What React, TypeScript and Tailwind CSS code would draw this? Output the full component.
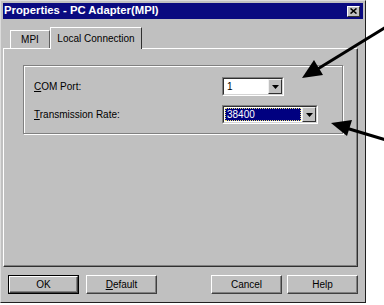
import React from "react";

const Combo = ({ value, width, focused }: any) => {
  return (
    <div
      className={`flex h-[19px] border border-t-[#808080] border-l-[#808080] border-r-white border-b-white`}
      style={{ width }}
    >
      <div className="flex flex-1 border border-t-[#303030] border-l-[#303030] border-r-[#d4d4d4] border-b-[#d4d4d4] bg-white">
        <div className="flex flex-1 items-center p-[1px]">
          {focused ? (
            <div className="flex h-full flex-1 items-center border border-dotted border-[#e8e070] bg-[#000080] pl-[1px] text-white">
              {value}
            </div>
          ) : (
            <div className="pl-[2px] text-black">{value}</div>
          )}
        </div>
        <div className="flex w-[14px] items-center justify-center border border-t-[#f0f0f0] border-l-[#f0f0f0] border-r-[#303030] border-b-[#303030] bg-[#c0c0c0]">
          <svg width="7" height="4" viewBox="0 0 7 4">
            <polygon points="0,0 7,0 3.5,4" fill="#000" />
          </svg>
        </div>
      </div>
    </div>
  );
};

const Btn = ({ children, isDefault }: any) => {
  return (
    <div
      className={
        isDefault
          ? "h-[19px] w-[71px] border border-black"
          : "h-[19px] w-[71px]"
      }
    >
      <div className="flex h-full w-full items-center justify-center border border-t-white border-l-white border-r-[#404040] border-b-[#404040] bg-[#c0c0c0] shadow-[inset_-1px_-1px_0_#808080] text-[10px] text-black">
        {children}
      </div>
    </div>
  );
};

export default function App() {
  return (
    <div className="relative h-[305px] w-[384px] overflow-hidden bg-white font-['Liberation_Sans',Arial,sans-serif] text-[10px]">
      <div className="flex h-[303px] w-[366px] flex-col border border-t-[#dcdcdc] border-l-[#dcdcdc] border-r-[#202020] border-b-[#202020] bg-[#c0c0c0] p-[2px]">
        {/* title bar */}
        <div className="flex h-[16px] items-center justify-between bg-[#0a0a80] pl-[1px] pr-[3px]">
          <span className="text-[11.3px] font-bold leading-none text-white">
            Properties - PC Adapter(MPI)
          </span>
          <div className="flex h-[11px] w-[13px] items-center justify-center border border-t-white border-l-white border-r-[#303030] border-b-[#303030] bg-[#c0c0c0]">
            <svg width="7" height="6" viewBox="0 0 7 6">
              <path d="M0.5 0.5 L6.5 5.5 M6.5 0.5 L0.5 5.5" stroke="#000" strokeWidth="1.6" />
            </svg>
          </div>
        </div>

        {/* tabs */}
        <div className="mt-[8px] flex h-[21px] items-end pl-[7px]">
          <div className="flex h-[18px] w-[40px] items-center justify-center border border-b-0 border-t-white border-l-white border-r-[#606060] text-black">
            MPI
          </div>
          <div className="relative z-10 -mb-[1px] flex h-[22px] w-[92px] items-start justify-center border border-b-0 border-t-white border-l-white border-r-[#303030] bg-[#c0c0c0] pt-[3px] text-black">
            Local Connection
          </div>
        </div>

        {/* tab panel */}
        <div className="mr-[5px] h-[219px] border border-t-white border-l-white border-r-[#303030] border-b-[#303030] shadow-[inset_-1px_-1px_0_#808080]">
          <div className="ml-[19px] mt-[16px] h-[69px] w-[320px] border border-[#808080] shadow-[inset_1px_1px_0_#fff,1px_1px_0_#fff]">
            <div className="mt-[11px] grid grid-cols-[188px_auto] gap-y-[9px] pl-[10px]">
              <div className="flex items-center text-black">
                <span>
                  <u>C</u>OM Port:
                </span>
              </div>
              <Combo value="1" width={62} />
              <div className="flex items-center text-black">
                <span>
                  <u>T</u>ransmission Rate:
                </span>
              </div>
              <Combo value="38400" width={96} focused />
            </div>
          </div>
        </div>

        {/* buttons */}
        <div className="mx-[5px] mt-[8px] flex justify-between">
          <div className="flex gap-[7px]">
            <Btn isDefault>OK</Btn>
            <Btn>
              <span>
                <u>D</u>efault
              </span>
            </Btn>
          </div>
          <div className="flex gap-[5px]">
            <Btn>Cancel</Btn>
            <Btn>Help</Btn>
          </div>
        </div>
      </div>

      {/* annotation arrows */}
      <svg className="absolute left-0 top-0" width="384" height="305" viewBox="0 0 384 305">
        <line x1="386" y1="27" x2="316" y2="70" stroke="#000" strokeWidth="3" />
        <polygon points="302,78 323,75 314,60" fill="#000" />
        <line x1="386" y1="140" x2="346" y2="128" stroke="#000" strokeWidth="3" />
        <polygon points="331,123 352,120 347,136" fill="#000" />
      </svg>
    </div>
  );
}
